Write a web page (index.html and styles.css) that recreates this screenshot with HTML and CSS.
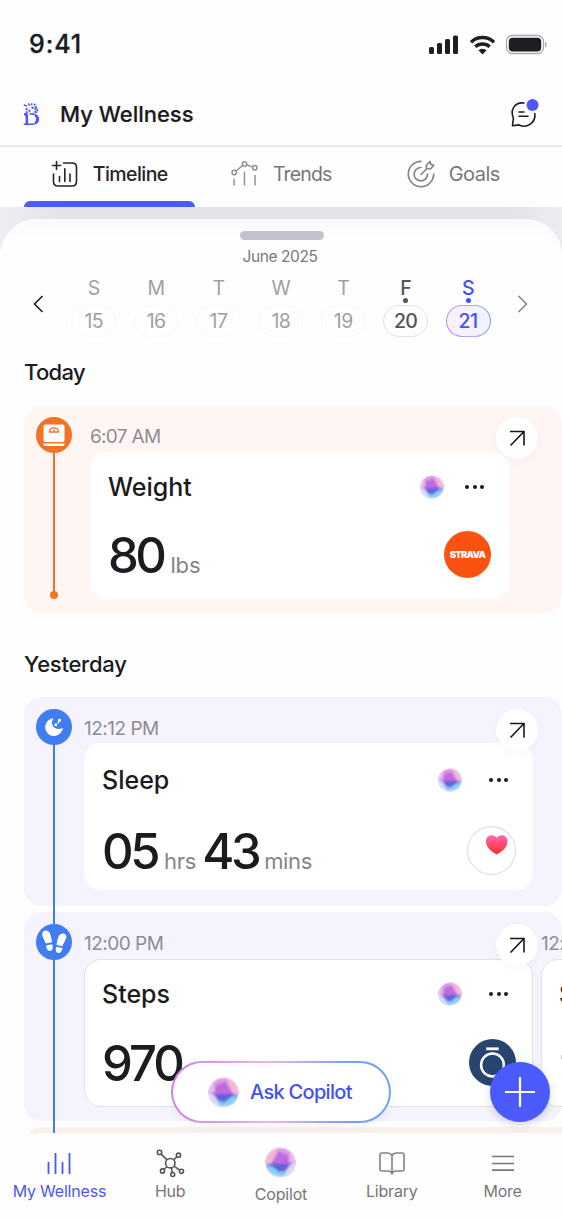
FILE: index.html
```html
<!DOCTYPE html>
<html lang="en">
<head>
<meta charset="utf-8">
<title>My Wellness</title>
<link rel="stylesheet" href="styles.css">
</head>
<body>
<svg class="defs" width="0" height="0" aria-hidden="true">
  <defs>
    <linearGradient id="orb-base" x1="0.35" y1="0" x2="0.6" y2="1">
      <stop offset="0" stop-color="#dfa9ea"/><stop offset="0.42" stop-color="#cf7fe0"/><stop offset="0.6" stop-color="#6f62dc"/><stop offset="0.8" stop-color="#76bdf0"/><stop offset="1" stop-color="#c5e8f7"/>
    </linearGradient>
    <filter id="soft" x="-30%" y="-30%" width="160%" height="160%"><feGaussianBlur stdDeviation="1.3"/></filter>
    <clipPath id="orb-clip"><circle cx="16" cy="16" r="15.5"/></clipPath>
    <linearGradient id="heart-fill" x1="0" y1="0" x2="0" y2="1"><stop offset="0" stop-color="#ff68b4"/><stop offset="1" stop-color="#ff2d20"/></linearGradient>
    <symbol id="orb" viewBox="0 0 32 32">
      <g clip-path="url(#orb-clip)">
        <rect width="32" height="32" fill="url(#orb-base)"/>
        <g filter="url(#soft)">
          <path d="M17-2 36 0v20L25 17z" fill="#f4b6d8"/>
          <path d="M-2 14 7 19 11 26 14 34-2 34z" fill="#d5dcf5"/>
          <path d="M-2 4 6 0 7 15-2 18z" fill="#e8b9e8"/>
          <path d="M8 9 18 5 24 18 7 19z" fill="#bf6ae0"/>
          <path d="M6 18 25 17 20 25 12 24z" fill="#6260da"/>
          <path d="M19 24 29 19 28 28 20 30z" fill="#88d4f4"/>
        </g>
        <circle cx="16" cy="16" r="15" fill="none" stroke="#f6e3f6" stroke-width="1.500" opacity=".6"/>
      </g>
    </symbol>
    <symbol id="arrow" viewBox="0 0 42 42"><path d="M14 14.500h14v14M28 14.500l-13.500 14" fill="none" stroke="#17171b" stroke-width="1.600"/></symbol>
  </defs>
</svg>

<header class="status">
  <span class="clock">9:41</span>
  <svg width="118" height="22" viewBox="0 0 118 22">
    <g fill="#1e1e23"><rect y="13" width="5" height="7" rx="1.500"/><rect x="8" y="9" width="5" height="11" rx="1.500"/><rect x="16" y="5" width="5" height="15" rx="1.500"/><rect x="24" y="1.500" width="5" height="18.500" rx="1.500"/></g>
    <g fill="none" stroke="#1e1e23" stroke-width="3.400"><path d="M42 8.200a16.500 16.500 0 0 1 23 0M46.300 12.800a10.500 10.500 0 0 1 14.400 0"/></g><path d="M49.500 16.200a6 6 0 0 1 8 0l-4 4.300z" fill="#1e1e23"/>
    <rect x="77.500" y="1.500" width="37" height="18" rx="6" fill="none" stroke="#aaa9ae" stroke-width="1.300"/><rect x="79.800" y="3.800" width="32.400" height="13.600" rx="4" fill="#1e1e23"/><path d="M116.200 7.800c2 .7 2 5 0 5.700z" fill="#aaa9ae"/>
  </svg>
</header>
<div class="title-bar">
  <svg width="18" height="24" viewBox="0 0 18 24" fill="none" stroke="#4b5af5">
    <path d="M.8 22.200H9c8.500 0 8.500-9.500.5-10.200H7" stroke-width="1.400"/><path d="M3.800 12.500v9.500M1 12.300h3.500" stroke-width="2.600"/><path d="M12.200 13.200c3 1.800 3 6 0 8" stroke-width="2.600"/>
    <path d="M3.600 6v5M6.500 7.500v4M8.500 6c4.500-1.500 6.500 3.500 1.500 5.300" stroke-width="1.900" stroke-dasharray="2.200 1"/><path d="M12 4.500c3 1.500 3 4.500 1 6.500" stroke-width="1.700" stroke-dasharray="2.400 1"/><path d="M.8 3l3 1M5 1.500l2 2M9 1.300l-.5 2M12.500 1.800l-1.500 1.700" stroke-width="1.500"/>
  </svg>
  <h1>My Wellness</h1>
  <svg class="chat" width="32" height="32" viewBox="0 0 32 32" fill="none" stroke="#1b1b20" stroke-width="1.600" stroke-linecap="round" stroke-linejoin="round">
    <path d="M16 5C6 4 2 12.500 5.400 20L4.500 27.700l6.500-.8C20 31 28 24 26.800 15.500M11 14h5M11 18.300h9"/><circle cx="24.500" cy="7" r="6" fill="#4957fb" stroke="none"/>
  </svg>
</div>
<nav class="tabs">
  <div class="tab tab-active">
    <svg width="28" height="28" viewBox="0 0 28 28" fill="none" stroke="#25252a" stroke-width="1.600" stroke-linecap="round"><path d="M12.500 3H21q4.500 0 4.500 4.500v13.800Q25.500 26 21 26H7q-4.500 0-4.500-4.500V14M5.500 1.500v8M1.500 5.500h8M8.500 16.500v5M13.800 8.800v12.700M19 14v7.500"/></svg>
    <span>Timeline</span>
  </div>
  <div class="tab tab-trends">
    <svg width="28" height="28" viewBox="0 0 28 28" fill="none" stroke="#929196" stroke-width="1.500"><path d="M3 18.500v7M13.500 11.500v14M24 15v10.500M4.800 11.200l7-6M15.600 4.700l6.300 2.400"/><circle cx="3.200" cy="12.500" r="2.200"/><circle cx="13.500" cy="4" r="2.200"/><circle cx="23.800" cy="7.700" r="2.200"/></svg>
    <span>Trends</span>
  </div>
  <div class="tab tab-goals">
    <svg width="28" height="28" viewBox="0 0 28 28" fill="none" stroke="#858489" stroke-width="1.700" stroke-linecap="round" stroke-linejoin="round"><path d="M14 1.300a12.700 12.700 0 1 0 12.700 12.700M14 7.500a6.700 6.700 0 1 0 6.500 6.500M14 14.500l6-6M19.500 8.500V5L23 1.500l.8 3 3 .8-3.300 3.700z"/></svg>
    <span>Goals</span>
  </div>
</nav>

<main class="backdrop">
  <div class="sheet">
    <div class="handle"></div>
    <div class="month">June 2025</div>
    <div class="week">
      <svg class="prev" width="14" height="20" viewBox="0 0 14 20"><path d="M11.500 2 3.500 10l8 8" fill="none" stroke="#1b1b20" stroke-width="1.600"/></svg>
      <div class="days">
        <div class="day"><b>S</b><i></i><span>15</span></div>
        <div class="day"><b>M</b><i></i><span>16</span></div>
        <div class="day"><b>T</b><i></i><span>17</span></div>
        <div class="day"><b>W</b><i></i><span>18</span></div>
        <div class="day"><b>T</b><i></i><span>19</span></div>
        <div class="day has-data"><b>F</b><i></i><span>20</span></div>
        <div class="day selected"><b>S</b><i></i><span>21</span></div>
      </div>
      <svg class="next" width="14" height="20" viewBox="0 0 14 20"><path d="M2.500 2l8 8-8 8" fill="none" stroke="#858489" stroke-width="1.600"/></svg>
    </div>

    <h2>Today</h2>
    <section class="entry entry-weight">
      <div class="rail">
        <svg width="36" height="36" viewBox="0 0 36 36"><circle cx="18" cy="18" r="18" fill="#f37324"/><rect x="7.500" y="7.500" width="21" height="17.500" rx="2" fill="#fff"/><path d="M7.500 26.500h21c0 2-.5 2.500-2 2.500h-17c-1.500 0-2-.5-2-2.500z" fill="#fff"/><path d="M13.500 15c0-5.500 9-5.500 9 0zM18 12.500v1.500" fill="none" stroke="#f37324" stroke-width="1.400" stroke-linejoin="round"/></svg>
        <span class="stem"></span><span class="end"></span>
      </div>
      <div class="record">
        <time>6:07 AM</time>
        <article class="card">
          <div class="card-head"><h3>Weight</h3><svg class="orb" width="24" height="24"><use href="#orb"/></svg><span class="dots"><i></i><i></i><i></i></span></div>
          <div class="value"><strong>80</strong><small>lbs</small><span class="source strava">STRAVA</span></div>
        </article>
      </div>
      <svg class="open" width="42" height="42"><use href="#arrow"/></svg>
    </section>

    <h2>Yesterday</h2>
    <section class="entry entry-sleep">
      <div class="rail">
        <svg width="36" height="36" viewBox="0 0 36 36"><circle cx="18" cy="18" r="18" fill="#3f7df0"/><path d="M17.500 9.200c-4.500 6.500 1.500 13.300 9.500 9.800C25.500 27 15.500 30 11 23.500 6.700 17 11 9.800 17.500 9.200z" fill="#fff"/><path d="M22 10h2.800v2.800H22zM18.500 14.500h2.500v2.500h-2.500zM21.500 13h1.500v1.500h-1.500z" fill="#fff"/></svg>
        <span class="stem"></span>
      </div>
      <div class="record">
        <time>12:12 PM</time>
        <article class="card">
          <div class="card-head"><h3>Sleep</h3><svg class="orb" width="24" height="24"><use href="#orb"/></svg><span class="dots"><i></i><i></i><i></i></span></div>
          <div class="value"><strong>05</strong><small>hrs</small><strong class="second">43</strong><small>mins</small>
            <svg class="source" width="49" height="49" viewBox="0 0 49 49"><circle cx="24.500" cy="24.500" r="23.900" fill="#fff" stroke="#e0dfe3" stroke-width="1.200"/><path d="M29.700 28.500C24 25.500 19 21 19 15.500c0-7 8-8 10.700-3.500 2.600-4.500 10.800-3.500 10.800 3.500 0 5.500-5 10-10.800 13z" fill="url(#heart-fill)"/></svg>
          </div>
        </article>
      </div>
      <svg class="open" width="42" height="42"><use href="#arrow"/></svg>
    </section>
    <section class="entry entry-steps">
      <div class="rail">
        <span class="bridge"></span>
        <svg width="36" height="36" viewBox="0 0 36 36"><circle cx="18" cy="18" r="18" fill="#3f7df0"/><g fill="#fff"><path d="M6.200 10.500C5.800 5.500 12.700 5.300 14.200 10c1 3 1.500 5.500 1.800 8.200l-6.200 1.300C9 16.500 6.800 14.500 6.200 10.500z"/><path d="M10 21.500l6.200-1.300c1.200 3.500.3 6-1.800 6.500-2.500.4-3.900-1.500-4.400-5.200z"/><path d="M30.300 13.300c.8-4.800-6.300-5.300-7.800-.7-1 3-1.800 5.600-1.900 8.400l6.100 1.300c.2-3 2.900-5 3.600-9z"/><path d="M26.500 24.100l-6.200-1.300c-1.200 3.300-.5 5.600 1.600 6.200 2.400.5 4-1.200 4.600-4.900z"/></g></svg>
        <span class="stem"></span>
      </div>
      <div class="record">
        <time>12:00 PM</time>
        <article class="card">
          <div class="card-head"><h3>Steps</h3><svg class="orb" width="24" height="24"><use href="#orb"/></svg><span class="dots"><i></i><i></i><i></i></span></div>
          <div class="value"><strong>970</strong>
            <svg class="source" width="47" height="47" viewBox="0 0 47 47"><circle cx="23.500" cy="23.500" r="23.500" fill="#27456f"/><g fill="none" stroke="#fff"><circle cx="23.500" cy="26" r="11.400" stroke-width="2.500"/><path d="M17.300 9.800h12.400" stroke-width="2.800"/></g></svg>
          </div>
        </article>
      </div>
      <div class="record record-next">
        <time>12:00 PM</time>
        <article class="card"><div class="card-head"><h3>Steps</h3></div><div class="value"><strong>970</strong></div></article>
      </div>
      <svg class="open" width="42" height="42"><use href="#arrow"/></svg>
    </section>
    <section class="entry-peek"><span></span></section>
  </div>
</main>

<button class="ask"><svg width="31" height="31"><use href="#orb"/></svg><span>Ask Copilot</span></button>
<button class="add" aria-label="Add"><svg width="30" height="30" viewBox="0 0 30 30"><path d="M15 0v30M0 15h30" stroke="#fff" stroke-width="2.200"/></svg></button>

<nav class="bottom">
  <div class="item item-active"><svg width="30" height="30" viewBox="0 0 30 30" fill="none" stroke="#4b57f5" stroke-width="1.800"><path d="M4.500 14v12M11.500 5v21M18.500 14v12M25.500 5v21"/></svg><span>My Wellness</span></div>
  <div class="item"><svg width="30" height="30" viewBox="0 0 30 30" fill="none" stroke="#55545a" stroke-width="1.600"><circle cx="15.300" cy="15.200" r="4.700"/><circle cx="4.500" cy="4.500" r="2.200"/><circle cx="23.500" cy="7.200" r="2.100"/><circle cx="7.500" cy="23" r="2.100"/><circle cx="17.700" cy="26.500" r="2"/><circle cx="26.500" cy="23.300" r="2"/><path d="M6.100 6.100l5.800 5.600M21.800 8.800l-3 3M12 18.500l-3 3M16.500 20l.7 4.500M19 18.200l5.800 4"/></svg><span>Hub</span></div>
  <div class="item item-copilot"><svg width="31" height="31"><use href="#orb"/></svg><span>Copilot</span></div>
  <div class="item"><svg width="30" height="30" viewBox="0 0 30 30" fill="none" stroke="#828187" stroke-width="1.600" stroke-linejoin="round"><path d="M15 7.500Q13.500 5 10.500 5H5Q3 5 3 7v14q0 2 2 2h6q3 0 4 3 1-3 4-3h6q2 0 2-2V7q0-2-2-2h-5.500Q16.500 5 15 7.500zV25"/></svg><span>Library</span></div>
  <div class="item"><svg width="30" height="30" viewBox="0 0 30 30" stroke="#77767c" stroke-width="1.700"><path d="M4 8.500h22M4 15.500h22M4 22.200h22"/></svg><span>More</span></div>
</nav>
</body>
</html>
```
FILE: styles.css
```css
* { box-sizing: border-box; }
body { position: relative; display: flex; flex-direction: column; width: 562px; height: 1220px; margin: 0; overflow: hidden; background: #fefefe; color: #1b1b20; font-family: Inter, "Liberation Sans", sans-serif; }
h1, h2, h3 { margin: 0; font-weight: 500; }
svg { display: block; flex: none; }
.defs { position: absolute; }

.status { display: flex; justify-content: space-between; height: 82px; padding: 31px 15px 0 29px; }
.status svg { margin-top: 3px; }
.clock { font-size: 25px; line-height: 27px; font-weight: 500; letter-spacing: .9px; -webkit-text-stroke: .3px; }
.title-bar { display: flex; align-items: center; height: 65px; padding: 0 22px 0 23px; border-bottom: 2px solid #e9e8ec; }
.title-bar h1 { margin-left: 19px; font-size: 22px; line-height: 30px; -webkit-text-stroke: .2px; }
.chat { margin-left: auto; }

.tabs { display: flex; height: 60px; padding-left: 24px; }
.tab { position: relative; display: flex; align-items: center; justify-content: center; gap: 13.500px; width: 171px; height: 60px; padding-bottom: 6px; color: #77767b; font-size: 20px; letter-spacing: -.3px; }
.tab + .tab { margin-left: 1px; }
.tab-active { color: #25252a; font-size: 19.500px; font-weight: 500; letter-spacing: -.55px; }
.tab-active::after { content: ""; position: absolute; left: 0; right: 0; bottom: 0; height: 6px; border-radius: 6px 6px 0 0; background: #4b5afb; }
.tab-trends { font-size: 19.500px; letter-spacing: -.85px; }
.tab-goals { letter-spacing: -.5px; }

.backdrop { flex: 1; min-height: 0; overflow: hidden; padding-top: 12px; background: linear-gradient(90deg, #eeedf1, #e3e2e7 12%, #e3e2e7 90%, #edecf1); }
.sheet { height: 1000px; padding: 12px 0 0 24px; border-radius: 36px 36px 0 0; background: linear-gradient(#faf9fd, #fefefe 22px); }
.handle { width: 84px; height: 9px; margin-left: 216px; border-radius: 5px; background: #c0c3cd; }
.month { width: 512px; margin-top: 7px; text-align: center; color: #79787d; font-size: 15.500px; line-height: 20px; letter-spacing: -.4px; }
.week { display: flex; align-items: center; height: 71px; margin-top: 1px; padding: 1px 0 0 7px; }
.days { display: flex; margin-left: 17.500px; padding-top: 3px; }
.day { display: flex; flex-direction: column; align-items: center; width: 62.400px; color: #a09fa4; font-size: 19.500px; letter-spacing: -.6px; }
.day b { height: 24px; padding-top: 1px; line-height: 24px; font-weight: 400; }
.day i { width: 5px; height: 5px; margin-top: -1px; border-radius: 50%; }
.day span { width: 45px; height: 32px; margin-top: 2px; border: 1.500px solid #f8f7fa; border-radius: 16px; line-height: 30px; text-align: center; }
.has-data { color: #555459; }
.has-data b, .selected b, .has-data span, .selected span { font-weight: 500; }
.has-data i { background: #555459; }
.has-data span { border-color: #e2e1e5; }
.selected { color: #4350f3; }
.selected i { background: #4350f3; }
.selected span { border: 1.500px solid transparent; background: linear-gradient(#f3f2fe, #f3f2fe) padding-box, linear-gradient(90deg, #c986df, #b9a5ef 55%, #76a1f5) border-box; }
.next { margin-left: 17px; }
h2 { height: 72px; padding-top: 21px; font-size: 22px; line-height: 28px; letter-spacing: -.25px; }
.week + h2 { height: 67px; padding-top: 19px; letter-spacing: -.7px; }

.entry { position: relative; display: flex; border-radius: 18px; }
.entry-weight { height: 207px; margin-bottom: 16px; background: #fff6f3; --accent: #f37324; }
.entry-weight + h2 { height: 68px; padding-top: 21px; }
.entry-sleep, .entry-steps { height: 209px; background: #f4f3fe; --accent: #3f7df0; }
.entry-steps { margin-top: 6px; }
.rail { display: flex; flex: none; flex-direction: column; align-items: center; width: 60px; padding-top: 12px; }
.entry-weight .rail { padding-top: 11px; }
.stem { flex: 1; width: 2px; background: var(--accent); }
.end { width: 8px; height: 8px; margin-bottom: 14px; border-radius: 50%; background: var(--accent); }
.bridge { width: 2px; height: 18px; margin-top: -18px; background: var(--accent); }
.record { flex: none; width: 449px; }
.entry-weight .record { width: 420px; margin-left: 6px; }
.record-next { margin-left: 8px; }
time { display: block; height: 46px; padding-top: 19px; color: #8d8c93; font-size: 19px; line-height: 24px; letter-spacing: -.5px; white-space: nowrap; }
.entry-weight time { letter-spacing: -.7px; }
.entry-sleep time { padding-top: 20px; }
.entry-steps time { height: 47px; padding-top: 20px; }
.card { height: 147px; padding: 20px 17px 0 18px; border-radius: 17px; background: #fff; }
.entry-weight .card { padding: 20px 18px 0 18px; }
.entry-sleep .card { padding: 22px 16px 0 18px; }
.entry-steps .card { height: 148px; border: 1.500px solid #e2e0e8; padding: 19px 15px 0 17px; }
.card-head { display: flex; align-items: center; height: 30px; }
.card h3 { flex: 1; font-size: 25px; line-height: 30px; }
.dots { display: flex; gap: 3.500px; margin: 0 9px 0 27px; }
.entry-weight .dots { margin: 0 8px 0 21px; }
.dots i { width: 4px; height: 4px; border-radius: 50%; background: #1b1b20; }
.value { display: flex; align-items: baseline; height: 60px; margin-top: 23px; padding-top: 4px; }
.entry-weight .value { margin-top: 21px; padding-top: 5px; }
.entry-steps .value { margin-top: 22px; padding-top: 5px; }
.entry-sleep .value { padding-top: 6px; }
.value strong { font-size: 49px; line-height: 56px; font-weight: 500; letter-spacing: -3.500px; }
.entry-steps .value strong { letter-spacing: -3px; }
.value small { margin-left: 7px; color: #858489; font-size: 22px; letter-spacing: -.2px; }
.value .second { margin-left: 6px; }
.value .second + small { margin-left: 6px; letter-spacing: -.3px; }
.source { align-self: flex-start; margin-left: auto; margin-top: 3px; margin-right: 1px; }
.entry-weight .source { margin-top: 3px; }
.entry-sleep .source { margin-top: 2px; }
.strava { width: 47px; height: 47px; border-radius: 50%; background: #fc5211; color: #fff; font-size: 9.500px; font-weight: 900; line-height: 47px; text-align: center; letter-spacing: -.8px; }
.open { position: absolute; left: 472px; top: 12px; border-radius: 50%; background: #fff; box-shadow: 0 3px 10px rgba(70, 50, 90, .04); }
.entry-weight .open { top: 11px; }
.entry-peek { height: 30px; margin-top: 6px; border-radius: 18px 0 0 0; padding-left: 29px; background: linear-gradient(#fbf3f0, #f4ecea 10px); }
.entry-peek span { display: block; width: 2px; height: 20px; transform: translateY(-7px); background: #3f7df0; }

button { font: inherit; }
.ask { position: absolute; left: 171px; top: 1061px; display: flex; align-items: center; gap: 11px; width: 220px; height: 62px; padding: 0 0 0 35px; border: 2px solid transparent; border-radius: 31px; background: linear-gradient(#fff, #fff) padding-box, linear-gradient(90deg, #cc83e3, #eeb5e9 45%, #76a0f5 80%) border-box; color: #4350f3; font-size: 20px; font-weight: 500; letter-spacing: -.7px; box-shadow: 0 3px 10px rgba(60, 50, 120, .06); white-space: nowrap; }
.add { position: absolute; left: 490px; top: 1062px; display: grid; place-items: center; width: 60px; height: 60px; padding: 0; border: 0; border-radius: 50%; background: #4b5afb; box-shadow: 0 3px 9px rgba(40, 30, 90, .18); }

.bottom { display: flex; height: 87px; padding: 15px 4px 0; background: #fefefe; }
.item { display: flex; flex-direction: column; align-items: center; width: 110.800px; color: #77767b; font-size: 16px; line-height: 22px; letter-spacing: -.2px; }
.item span { margin-top: 2px; white-space: nowrap; }
.item-copilot svg { margin-top: -1px; transform: scaleX(-1); }
.item-copilot span { margin-top: 5px; }
.item-active { color: #4b57f5; }
```
